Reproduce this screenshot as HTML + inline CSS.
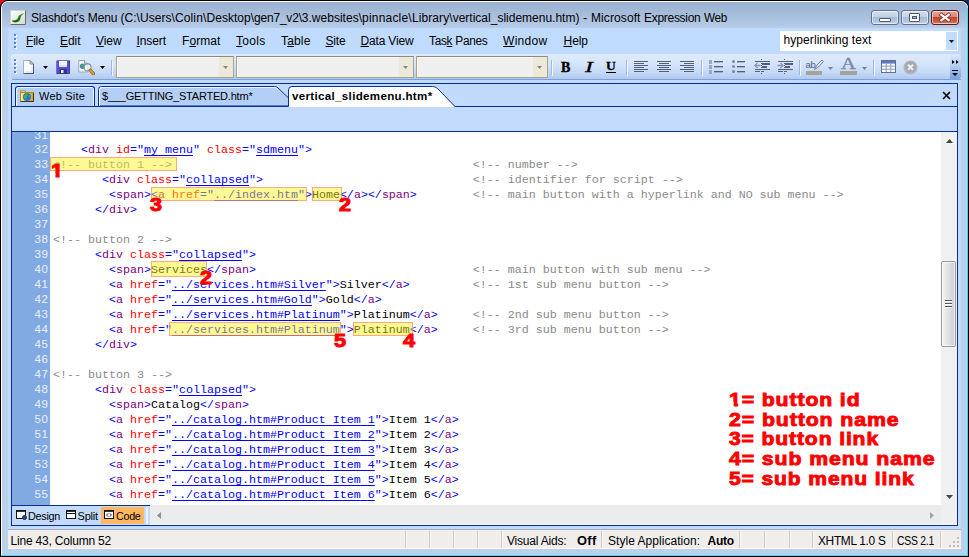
<!DOCTYPE html>
<html lang="en"><head><meta charset="utf-8"><title>Slashdot's Menu - Microsoft Expression Web</title>
<style>
html,body{margin:0;padding:0;background:#b9d1ea;}
body{width:969px;height:557px;overflow:hidden;position:relative;font-family:"Liberation Sans",sans-serif;}
#win{position:absolute;left:0;top:0;width:969px;height:557px;overflow:hidden;}
#win div,#win span.t,#win svg,#win pre{position:absolute;box-sizing:border-box;}
span.t{white-space:pre;color:#000;}
u{text-decoration:underline;text-underline-offset:1px;}
pre.code{margin:0;font-family:"Liberation Mono",monospace;font-size:11.667px;line-height:15px;color:#000;white-space:pre;}
pre.code b{font-weight:normal;}
b.p{color:#0000ff;} b.g{color:#800080;} b.a{color:#ff0000;} b.v{color:#0000ff;text-decoration:underline;text-decoration-thickness:1px;text-underline-offset:1.5px;} b.v i{color:transparent;font-style:normal;} b.c{color:#8a8a8a;}

</style></head>
<body>
<div id="win">
<div style="left:0px;top:0px;width:9px;height:9px;background:#e8101c;"></div>
<div style="left:960px;top:0px;width:9px;height:9px;background:#142c66;"></div>
<div style="left:0px;top:0px;width:969px;height:557px;background:#000;border-radius:8px 8px 0 0;"></div>
<div style="left:1px;top:1px;width:967px;height:555px;background:#fff;border-radius:7px 7px 0 0;"></div>
<div style="left:2px;top:2px;width:966px;height:554px;background:#b9d1ea;border-radius:6px 6px 0 0;"></div>
<div style="left:967px;top:8px;width:1px;height:548px;background:#48d6f5;"></div>
<div style="left:1px;top:555px;width:967px;height:1px;background:#48d6f5;"></div>
<div style="left:2px;top:2px;width:965px;height:26px;background:linear-gradient(#98afcf,#a4bbd9 40%,#b6cce8);border-radius:6px 6px 0 0;"></div>
<svg style="left:10px;top:10px" width="16" height="15" viewBox="0 0 16 15"><defs><linearGradient id="ig" x1="0" y1="0" x2="1" y2="1"><stop offset="0" stop-color="#ffffff"/><stop offset="1" stop-color="#d6d9d4"/></linearGradient><linearGradient id="sg" x1="0" y1="1" x2="1" y2="0"><stop offset="0" stop-color="#0c6400"/><stop offset=".6" stop-color="#1f7d10"/><stop offset="1" stop-color="#62b044"/></linearGradient></defs><rect x="0.5" y="0.5" width="15" height="14" fill="url(#ig)" stroke="#c9d0d6"/><path d="M0.5 14.5H15.5V0.5" fill="none" stroke="#626b74"/><path d="M1.8 10.2C2.2 13 8.6 13.6 10.3 9.2C10.7 7.8 10.4 7.4 11.2 6.2C12 5 13.4 3.8 14.6 3C12.4 3.4 10 4.4 8.8 6C8 7 8.4 7.6 7.6 8.8C6.4 10.4 3.6 10.8 1.8 10.2Z" fill="url(#sg)"/></svg>
<span class="t" style="left:31px;top:10px;font-size:12px;line-height:16px;letter-spacing:-0.137px;color:#000;">Slashdot's Menu </span>
<span class="t" style="left:120.5px;top:10px;font-size:12px;line-height:16px;letter-spacing:0.04px;color:#000;">(C:\Users\</span>
<span class="t" style="left:174.9px;top:10px;font-size:12px;line-height:16px;letter-spacing:0.152px;color:#000;">Colin\</span>
<span class="t" style="left:206.5px;top:10px;font-size:12px;line-height:16px;letter-spacing:0.018px;color:#000;">Desktop\</span>
<span class="t" style="left:254px;top:10px;font-size:12px;line-height:16px;letter-spacing:-0.199px;color:#000;">gen7_v2\</span>
<span class="t" style="left:301.8px;top:10px;font-size:12px;line-height:16px;letter-spacing:0.015px;color:#000;">3.websites\</span>
<span class="t" style="left:362px;top:10px;font-size:12px;line-height:16px;letter-spacing:0.206px;color:#000;">pinnacle\</span>
<span class="t" style="left:411.9px;top:10px;font-size:12px;line-height:16px;letter-spacing:0.098px;color:#000;">Library\</span>
<span class="t" style="left:452.7px;top:10px;font-size:12px;line-height:16px;letter-spacing:0.002px;color:#000;">vertical_slidemenu.htm) </span>
<span class="t" style="left:582.8px;top:10px;font-size:12px;line-height:16px;letter-spacing:0.3px;transform-origin:0 0;transform:scaleX(1.0323);--x:0px;color:#000;">- </span>
<span class="t" style="left:591px;top:10px;font-size:12px;line-height:16px;letter-spacing:0.098px;color:#000;">Microsoft </span>
<span class="t" style="left:644px;top:10px;font-size:12px;line-height:16px;letter-spacing:-0.291px;color:#000;">Expression </span>
<span class="t" style="left:703.5px;top:10px;font-size:12px;line-height:16px;letter-spacing:-0.3px;transform-origin:0 0;transform:scaleX(0.9759);--x:0px;color:#000;">Web</span>
<div style="left:871px;top:10px;width:28px;height:15px;background:linear-gradient(#d3dfee 0,#c2d1e6 45%,#a9bedb 50%,#b3c7e2 80%,#c6d6ea);border:1px solid #5f7390;border-radius:3px;box-shadow:inset 0 0 0 1px rgba(255,255,255,.55);"></div>
<div style="left:901px;top:10px;width:28px;height:15px;background:linear-gradient(#d3dfee 0,#c2d1e6 45%,#a9bedb 50%,#b3c7e2 80%,#c6d6ea);border:1px solid #5f7390;border-radius:3px;box-shadow:inset 0 0 0 1px rgba(255,255,255,.55);"></div>
<div style="left:931px;top:10px;width:28px;height:15px;background:linear-gradient(#e9a99c 0,#dc8473 45%,#c7452d 50%,#cf5a3f 80%,#dd8a70);border:1px solid #5b1d1f;border-radius:3px;box-shadow:inset 0 0 0 1px rgba(255,255,255,.55);"></div>
<div style="left:879px;top:18px;width:12px;height:4px;background:#fff;border:1px solid #4d5b70;border-radius:1px;"></div>
<div style="left:909px;top:13px;width:11px;height:9px;background:#fff;border:1px solid #4d5b70;border-radius:1px;"></div>
<div style="left:912px;top:16px;width:5px;height:3px;background:#9fb3d1;border:1px solid #4d5b70;"></div>
<svg style="left:938px;top:12px" width="14" height="11" viewBox="0 0 14 11"><path d="M3.4 2.8L10.6 8.2M10.6 2.8L3.4 8.2" stroke="#7a3028" stroke-width="3.8" stroke-linecap="square"/><path d="M3.4 2.8L10.6 8.2M10.6 2.8L3.4 8.2" stroke="#fff" stroke-width="2.3" stroke-linecap="square"/></svg>
<div style="left:8px;top:28px;width:953px;height:521px;background:#bfdbff;"></div>
<div style="left:8px;top:28px;width:953px;height:25px;background:#bfdbff;"></div>
<div style="left:15px;top:35px;width:2px;height:2px;background:#f4f8ff;"></div>
<div style="left:14px;top:34px;width:2px;height:2px;background:#5f7fc8;"></div>
<div style="left:15px;top:39px;width:2px;height:2px;background:#f4f8ff;"></div>
<div style="left:14px;top:38px;width:2px;height:2px;background:#5f7fc8;"></div>
<div style="left:15px;top:43px;width:2px;height:2px;background:#f4f8ff;"></div>
<div style="left:14px;top:42px;width:2px;height:2px;background:#5f7fc8;"></div>
<div style="left:15px;top:47px;width:2px;height:2px;background:#f4f8ff;"></div>
<div style="left:14px;top:46px;width:2px;height:2px;background:#5f7fc8;"></div>
<span class="t" style="left:26px;top:33px;font-size:12px;line-height:16px;letter-spacing:-0.215px;"><u>F</u>ile</span>
<span class="t" style="left:60px;top:33px;font-size:12px;line-height:16px;letter-spacing:-0.051px;"><u>E</u>dit</span>
<span class="t" style="left:96px;top:33px;font-size:12px;line-height:16px;letter-spacing:-0.078px;"><u>V</u>iew</span>
<span class="t" style="left:136.5px;top:33px;font-size:12px;line-height:16px;letter-spacing:-0.089px;"><u>I</u>nsert</span>
<span class="t" style="left:182px;top:33px;font-size:12px;line-height:16px;letter-spacing:0.078px;">F<u>o</u>rmat</span>
<span class="t" style="left:236px;top:33px;font-size:12px;line-height:16px;letter-spacing:0.297px;"><u>T</u>ools</span>
<span class="t" style="left:281px;top:33px;font-size:12px;line-height:16px;letter-spacing:0.159px;">T<u>a</u>ble</span>
<span class="t" style="left:325.5px;top:33px;font-size:12px;line-height:16px;letter-spacing:-0.176px;"><u>S</u>ite</span>
<span class="t" style="left:360.5px;top:33px;font-size:12px;line-height:16px;letter-spacing:-0.165px;"><u>D</u>ata View</span>
<span class="t" style="left:429px;top:33px;font-size:12px;line-height:16px;letter-spacing:-0.3px;transform-origin:0 0;transform:scaleX(0.9907);--x:0px;">Tas<u>k</u> Panes</span>
<span class="t" style="left:503px;top:33px;font-size:12px;line-height:16px;letter-spacing:0.3px;transform-origin:0 0;transform:scaleX(1.0003);--x:0px;"><u>W</u>indow</span>
<span class="t" style="left:563.5px;top:33px;font-size:12px;line-height:16px;letter-spacing:-0.047px;"><u>H</u>elp</span>
<div style="left:780px;top:31px;width:178px;height:20px;background:#fff;"></div>
<div style="left:946px;top:32px;width:11px;height:18px;background:#c3dcfd;"></div>
<span class="t" style="left:783.5px;top:32px;font-size:12px;line-height:16px;letter-spacing:0.075px;">hyperlinking text</span>
<svg style="left:949px;top:40px" width="5" height="3" viewBox="0 0 5 3"><path d="M0 0H5L2.5 3Z" fill="#000"/></svg>
<div style="left:8px;top:53px;width:953px;height:30px;background:#bfdbff;"></div>
<div style="left:11px;top:54px;width:940px;height:25px;background:linear-gradient(#dfeafb 0,#d5e4f9 40%,#c3d8f6 75%,#b0caef 100%);border-radius:3px 0 0 3px;"></div>
<div style="left:12px;top:79px;width:949px;height:1px;background:#7e9fd8;"></div>
<div style="left:950px;top:54px;width:11px;height:25px;background:linear-gradient(#dbe8fb,#b7cff3 45%,#8fb0e6 80%,#7a9fde);border-radius:0 3px 3px 0;"></div>
<div style="left:15px;top:60px;width:2px;height:2px;background:#f4f8ff;"></div>
<div style="left:14px;top:59px;width:2px;height:2px;background:#5f7fc8;"></div>
<div style="left:15px;top:64px;width:2px;height:2px;background:#f4f8ff;"></div>
<div style="left:14px;top:63px;width:2px;height:2px;background:#5f7fc8;"></div>
<div style="left:15px;top:68px;width:2px;height:2px;background:#f4f8ff;"></div>
<div style="left:14px;top:67px;width:2px;height:2px;background:#5f7fc8;"></div>
<div style="left:15px;top:72px;width:2px;height:2px;background:#f4f8ff;"></div>
<div style="left:14px;top:71px;width:2px;height:2px;background:#5f7fc8;"></div>
<svg style="left:23px;top:60px" width="11" height="14" viewBox="0 0 11 14"><path d="M0.5 0.5H7L10.5 4V13.5H0.5Z" fill="#fdfdfe" stroke="#a9b0c0"/><path d="M0.5 13.5H10.5V4" fill="none" stroke="#4e5566"/><path d="M7 0.5V4H10.5Z" fill="#dfe3ec" stroke="#6a7184" stroke-width=".8"/><path d="M2 12H9V6" fill="none" stroke="#d5dae6"/></svg>
<svg style="left:43px;top:66px" width="5" height="3" viewBox="0 0 5 3"><path d="M0 0H5L2.5 3Z" fill="#000"/></svg>
<svg style="left:56px;top:60px" width="14" height="14" viewBox="0 0 14 14"><rect x="0.5" y="0.5" width="13" height="13" rx="1" fill="#5454c8" stroke="#6f70d8"/><path d="M0.5 13.5H13.5V0.5" fill="none" stroke="#3c3ca0"/><rect x="3" y="1" width="8" height="6" fill="#f4f5fb"/><rect x="3" y="5" width="8" height="2" fill="#d9dbea"/><rect x="3.5" y="9" width="7.5" height="4.5" fill="#2e2f80"/><rect x="5" y="10" width="2.5" height="3" fill="#eef"/></svg>
<svg style="left:78px;top:59px" width="17" height="16" viewBox="0 0 17 16"><path d="M0.8 1.5H6.5L9.5 4.5V13H0.8Z" fill="#fbfcfe" stroke="#9aa3b6"/><path d="M6.5 1.5V4.5H9.5" fill="#e3e7ef" stroke="#7b8498" stroke-width=".8"/><circle cx="4.6" cy="7.2" r="2.7" fill="#3a86d4"/><path d="M2.8 6.4Q4.4 4.6 6.2 6Q6 8.2 4 8.6Z" fill="#4cb23c"/><circle cx="9.6" cy="8.4" r="3.5" fill="#eef3fb" fill-opacity=".82" stroke="#8a93a3" stroke-width="1.2"/><path d="M12.2 11.2L15.4 14.6" stroke="#8a5a20" stroke-width="3.2" stroke-linecap="round"/><path d="M12.2 11.2L15.4 14.6" stroke="#e09a40" stroke-width="2" stroke-linecap="round"/></svg>
<svg style="left:100px;top:66px" width="5" height="3" viewBox="0 0 5 3"><path d="M0 0H5L2.5 3Z" fill="#000"/></svg>
<div style="left:111px;top:60px;width:1px;height:15px;background:#9cb8e6;"></div>
<div style="left:112px;top:61px;width:1px;height:15px;background:#f4f8fe;"></div>
<div style="left:116px;top:56px;width:118px;height:22px;background:#efefef;border:1px solid #aaa48f;border-top-color:#8f8b7c;box-shadow:inset 1px 1px 0 #f8f8f6;"></div>
<div style="left:219px;top:57px;width:14px;height:20px;background:#ece9d8;"></div>
<svg style="left:223px;top:66px" width="5" height="3" viewBox="0 0 5 3"><path d="M0 0H5L2.5 3Z" fill="#858585"/></svg>
<div style="left:236px;top:56px;width:178px;height:22px;background:#efefef;border:1px solid #aaa48f;border-top-color:#8f8b7c;box-shadow:inset 1px 1px 0 #f8f8f6;"></div>
<div style="left:399px;top:57px;width:14px;height:20px;background:#ece9d8;"></div>
<svg style="left:403px;top:66px" width="5" height="3" viewBox="0 0 5 3"><path d="M0 0H5L2.5 3Z" fill="#858585"/></svg>
<div style="left:416px;top:56px;width:132px;height:22px;background:#efefef;border:1px solid #aaa48f;border-top-color:#8f8b7c;box-shadow:inset 1px 1px 0 #f8f8f6;"></div>
<div style="left:533px;top:57px;width:14px;height:20px;background:#ece9d8;"></div>
<svg style="left:537px;top:66px" width="5" height="3" viewBox="0 0 5 3"><path d="M0 0H5L2.5 3Z" fill="#858585"/></svg>
<div style="left:551px;top:60px;width:1px;height:15px;background:#9cb8e6;"></div>
<div style="left:552px;top:61px;width:1px;height:15px;background:#f4f8fe;"></div>
<span class="t" style="left:561px;top:59px;font-size:14px;line-height:18px;font-family:'Liberation Serif',serif;font-weight:bold;-webkit-text-stroke:.4px #000;">B</span>
<span class="t" style="left:584.5px;top:59px;font-size:14px;line-height:18px;font-family:'Liberation Serif',serif;font-style:italic;-webkit-text-stroke:.3px #000;transform-origin:0 0;transform:scaleX(1.7);">I</span>
<span class="t" style="left:606px;top:57px;font-size:13.5px;line-height:18px;font-family:'Liberation Serif',serif;font-weight:bold;-webkit-text-stroke:.3px #000;">U</span>
<div style="left:606px;top:72px;width:10px;height:1px;background:#000;"></div>
<div style="left:626px;top:60px;width:1px;height:15px;background:#9cb8e6;"></div>
<div style="left:627px;top:61px;width:1px;height:15px;background:#f4f8fe;"></div>
<div style="left:634px;top:61px;width:14px;height:1px;background:#54607a;"></div>
<div style="left:634px;top:63px;width:10px;height:1px;background:#54607a;"></div>
<div style="left:634px;top:65px;width:14px;height:1px;background:#54607a;"></div>
<div style="left:634px;top:67px;width:10px;height:1px;background:#54607a;"></div>
<div style="left:634px;top:69px;width:14px;height:1px;background:#54607a;"></div>
<div style="left:634px;top:71px;width:10px;height:1px;background:#54607a;"></div>
<div style="left:657px;top:61px;width:14px;height:1px;background:#54607a;"></div>
<div style="left:659px;top:63px;width:10px;height:1px;background:#54607a;"></div>
<div style="left:657px;top:65px;width:14px;height:1px;background:#54607a;"></div>
<div style="left:659px;top:67px;width:10px;height:1px;background:#54607a;"></div>
<div style="left:657px;top:69px;width:14px;height:1px;background:#54607a;"></div>
<div style="left:659px;top:71px;width:10px;height:1px;background:#54607a;"></div>
<div style="left:680px;top:61px;width:14px;height:1px;background:#54607a;"></div>
<div style="left:684px;top:63px;width:10px;height:1px;background:#54607a;"></div>
<div style="left:680px;top:65px;width:14px;height:1px;background:#54607a;"></div>
<div style="left:684px;top:67px;width:10px;height:1px;background:#54607a;"></div>
<div style="left:680px;top:69px;width:14px;height:1px;background:#54607a;"></div>
<div style="left:684px;top:71px;width:10px;height:1px;background:#54607a;"></div>
<div style="left:701px;top:60px;width:1px;height:15px;background:#9cb8e6;"></div>
<div style="left:702px;top:61px;width:1px;height:15px;background:#f4f8fe;"></div>
<div style="left:714px;top:61px;width:9px;height:1px;background:#54607a;"></div>
<div style="left:714px;top:62px;width:9px;height:1px;background:#54607a;opacity:.35;"></div>
<div style="left:709px;top:60px;width:3px;height:4px;background:#8e9bb8;opacity:.8;"></div>
<div style="left:714px;top:66px;width:9px;height:1px;background:#54607a;"></div>
<div style="left:714px;top:67px;width:9px;height:1px;background:#54607a;opacity:.35;"></div>
<div style="left:709px;top:65px;width:3px;height:4px;background:#8e9bb8;opacity:.8;"></div>
<div style="left:714px;top:71px;width:9px;height:1px;background:#54607a;"></div>
<div style="left:714px;top:72px;width:9px;height:1px;background:#54607a;opacity:.35;"></div>
<div style="left:709px;top:70px;width:3px;height:4px;background:#8e9bb8;opacity:.8;"></div>
<div style="left:737px;top:61px;width:8px;height:1px;background:#54607a;"></div>
<div style="left:737px;top:62px;width:8px;height:1px;background:#54607a;opacity:.35;"></div>
<div style="left:732px;top:60px;width:3px;height:3px;background:#7c88a4;border-radius:1.5px;"></div>
<div style="left:737px;top:66px;width:8px;height:1px;background:#54607a;"></div>
<div style="left:737px;top:67px;width:8px;height:1px;background:#54607a;opacity:.35;"></div>
<div style="left:732px;top:65px;width:3px;height:3px;background:#7c88a4;border-radius:1.5px;"></div>
<div style="left:737px;top:71px;width:8px;height:1px;background:#54607a;"></div>
<div style="left:737px;top:72px;width:8px;height:1px;background:#54607a;opacity:.35;"></div>
<div style="left:732px;top:70px;width:3px;height:3px;background:#7c88a4;border-radius:1.5px;"></div>
<svg style="left:754px;top:59px" width="17" height="16" viewBox="0 0 17 16"><path d="M7.5 0V16" stroke="#54607a" stroke-dasharray="1 1"/><path d="M1 2.5H16M1 10.5H16M1 12.5H6M8 12.5H10" stroke="#54607a"/><path d="M8 5H16M8 8H13" stroke="#54607a" stroke-width="2"/><path d="M6.5 6.5H1M3.5 4L1 6.5L3.5 9" fill="none" stroke="#8796bd" stroke-width="1.3"/></svg>
<svg style="left:777px;top:59px" width="17" height="16" viewBox="0 0 17 16"><path d="M7.5 0V16" stroke="#54607a" stroke-dasharray="1 1"/><path d="M1 2.5H16M1 10.5H16M1 12.5H6M8 12.5H10" stroke="#54607a"/><path d="M8 5H16M8 8H13" stroke="#54607a" stroke-width="2"/><path d="M0.5 6.5H6M3.5 4L6 6.5L3.5 9" fill="none" stroke="#8796bd" stroke-width="1.3"/></svg>
<div style="left:799px;top:60px;width:1px;height:15px;background:#9cb8e6;"></div>
<div style="left:800px;top:61px;width:1px;height:15px;background:#f4f8fe;"></div>
<span class="t" style="left:805.5px;top:58px;font-size:9.5px;line-height:14px;color:#54607a;letter-spacing:-.4px;">ab</span>
<svg style="left:814px;top:59px" width="10" height="11" viewBox="0 0 10 11"><path d="M0.5 10.5L3 6L8 1L9.4 2.6L4.6 7.8Z" fill="#dfe5f2" stroke="#6b7894" stroke-width=".9"/></svg>
<div style="left:806px;top:71px;width:16px;height:4px;background:#a5a49c;"></div>
<svg style="left:828px;top:67px" width="5" height="3" viewBox="0 0 5 3"><path d="M0 0H5L2.5 3Z" fill="#7b7f88"/></svg>
<span class="t" style="left:840.5px;top:54px;font-size:16px;line-height:20px;font-family:'Liberation Serif',serif;color:#7d89a8;-webkit-text-stroke:.4px #7d89a8;transform-origin:0 0;transform:scaleX(1.28);">A</span>
<div style="left:840px;top:71px;width:17px;height:4px;background:#a5a49c;"></div>
<svg style="left:862px;top:67px" width="5" height="3" viewBox="0 0 5 3"><path d="M0 0H5L2.5 3Z" fill="#7b7f88"/></svg>
<div style="left:873px;top:60px;width:1px;height:15px;background:#9cb8e6;"></div>
<div style="left:874px;top:61px;width:1px;height:15px;background:#f4f8fe;"></div>
<svg style="left:881px;top:60px" width="15" height="13" viewBox="0 0 15 13"><rect x="0.5" y="0.5" width="14" height="12" fill="#fff" stroke="#5f6f95"/><rect x="1" y="1" width="13" height="2.6" fill="#5a78c0"/><path d="M1 6.2H14M1 9.2H14M5.2 3.5V12M9.8 3.5V12" stroke="#8c99b8" stroke-width="1"/></svg>
<svg style="left:903px;top:60px" width="15" height="15" viewBox="0 0 15 15"><circle cx="7.5" cy="7.5" r="7" fill="#b4b6ba"/><circle cx="7.5" cy="7" r="5.6" fill="#a6a8ad"/><path d="M5 4.8L10 9.8M10 4.8L5 9.8" stroke="#eef0f3" stroke-width="2"/></svg>
<svg style="left:952px;top:60px" width="7" height="4" viewBox="0 0 7 4"><path d="M0 0L2.6 2L0 4ZM4 0L6.6 2L4 4Z" fill="#000"/></svg>
<div style="left:952px;top:70px;width:6px;height:1px;background:#000;"></div>
<svg style="left:952px;top:73px" width="6" height="3" viewBox="0 0 6 3"><path d="M0 0H6L3.0 3Z" fill="#000"/></svg>
<div style="left:8px;top:80px;width:953px;height:3px;background:#bfdbff;"></div>
<div style="left:11px;top:83px;width:947px;height:443px;background:#c2dbfc;border:1px solid #0a2d96;"></div>
<div style="left:12px;top:106px;width:945px;height:1px;background:#0a2d96;"></div>
<div style="left:15px;top:86px;width:80px;height:20px;background:#b4cff5;border:1px solid #0a2d96;border-bottom:none;border-radius:3px 3px 0 0;box-shadow:inset 1px 1px 0 #f2f7ff,inset -1px 0 0 #f2f7ff;"></div>
<svg style="left:20px;top:90px" width="14" height="12" viewBox="0 0 14 12"><defs><linearGradient id="fg" x1="0" y1="0" x2="1" y2="0"><stop offset="0" stop-color="#fdeb96"/><stop offset=".6" stop-color="#efc44c"/><stop offset="1" stop-color="#d89c1c"/></linearGradient></defs><path d="M0.5 2.5V0.8H5L6.2 2.5" fill="#f6dc84" stroke="#b08a2c"/><rect x="0.5" y="2.5" width="13" height="9" fill="url(#fg)" stroke="#b08a2c"/><path d="M0.5 11.5H13.5V3" fill="none" stroke="#4a3606"/><circle cx="7" cy="7" r="4" fill="#2f6fdc"/><path d="M4 5.4Q5.6 3.2 7.6 3.4Q8.4 5 7 6.4Q6.6 8.6 5.2 9.4Q3.4 7.6 4 5.4ZM9 4.2Q10.8 5.2 10.6 7.4Q9.6 8 9 6.6Z" fill="#3cb24a"/></svg>
<span class="t" style="left:39px;top:89px;font-size:11px;line-height:15px;letter-spacing:0.195px;">Web Site</span>
<svg style="left:98px;top:85px" width="194" height="21" viewBox="0 0 194 21"><path d="M0.5 21V4.5Q0.5 1.5 3.5 1.5H176.5Q179 1.5 181 3.8L190.5 13V21Z" fill="#b4cff5" stroke="#0a2d96"/><path d="M1.5 21V4.8Q1.5 2.5 3.8 2.5H176Q178.3 2.5 180 4.4" fill="none" stroke="#f2f7ff"/></svg>
<span class="t" style="left:102px;top:89px;font-size:11px;line-height:15px;letter-spacing:-0.208px;">$___GETTING_STARTED.htm*</span>
<svg style="left:288px;top:85px" width="170" height="23" viewBox="0 0 170 23"><path d="M0.5 23V5Q0.5 1.5 4 1.5H144.5Q147.5 1.5 149.5 3.5L167.5 22.5L167.5 23Z" fill="#fff"/><path d="M0.5 21.5V5Q0.5 1.5 4 1.5H144.5Q147.5 1.5 149.5 3.5L167 21.5" fill="none" stroke="#0a2d96"/></svg>
<span class="t" style="left:292px;top:89px;font-size:11px;line-height:15px;letter-spacing:0.3px;transform-origin:0 0;transform:scaleX(1.0527);--x:0px;font-weight:bold;">vertical_slidemenu.htm*</span>
<svg style="left:942px;top:91px" width="9" height="9" viewBox="0 0 9 9"><path d="M1 1L8 8M8 1L1 8" stroke="#000" stroke-width="1.7"/></svg>
<div style="left:12px;top:107px;width:945px;height:24px;background:#c2dbfc;"></div>
<div style="left:12px;top:131px;width:945px;height:1px;background:#0a2d96;"></div>
<div style="left:12px;top:132px;width:929px;height:374px;background:#fff;"></div>
<div style="left:12px;top:132px;width:38px;height:374px;background:#81a9e2;"></div>
<div style="left:12px;top:132px;width:38px;height:10px;overflow:hidden;"><span class="t" style="right:1.3px;top:-5px;font-size:11.5px;line-height:16px;color:#eaf1fc;letter-spacing:.7px;">31</span></div>
<span class="t" style="left:12px;width:36.7px;text-align:right;top:141px;font-size:11.5px;line-height:16px;color:#eaf1fc;letter-spacing:.7px;">32</span>
<span class="t" style="left:12px;width:36.7px;text-align:right;top:156px;font-size:11.5px;line-height:16px;color:#eaf1fc;letter-spacing:.7px;">33</span>
<span class="t" style="left:12px;width:36.7px;text-align:right;top:171px;font-size:11.5px;line-height:16px;color:#eaf1fc;letter-spacing:.7px;">34</span>
<span class="t" style="left:12px;width:36.7px;text-align:right;top:186px;font-size:11.5px;line-height:16px;color:#eaf1fc;letter-spacing:.7px;">35</span>
<span class="t" style="left:12px;width:36.7px;text-align:right;top:201px;font-size:11.5px;line-height:16px;color:#eaf1fc;letter-spacing:.7px;">36</span>
<span class="t" style="left:12px;width:36.7px;text-align:right;top:216px;font-size:11.5px;line-height:16px;color:#eaf1fc;letter-spacing:.7px;">37</span>
<span class="t" style="left:12px;width:36.7px;text-align:right;top:231px;font-size:11.5px;line-height:16px;color:#eaf1fc;letter-spacing:.7px;">38</span>
<span class="t" style="left:12px;width:36.7px;text-align:right;top:246px;font-size:11.5px;line-height:16px;color:#eaf1fc;letter-spacing:.7px;">39</span>
<span class="t" style="left:12px;width:36.7px;text-align:right;top:261px;font-size:11.5px;line-height:16px;color:#eaf1fc;letter-spacing:.7px;">40</span>
<span class="t" style="left:12px;width:36.7px;text-align:right;top:276px;font-size:11.5px;line-height:16px;color:#eaf1fc;letter-spacing:.7px;">41</span>
<span class="t" style="left:12px;width:36.7px;text-align:right;top:291px;font-size:11.5px;line-height:16px;color:#eaf1fc;letter-spacing:.7px;">42</span>
<span class="t" style="left:12px;width:36.7px;text-align:right;top:306px;font-size:11.5px;line-height:16px;color:#eaf1fc;letter-spacing:.7px;">43</span>
<span class="t" style="left:12px;width:36.7px;text-align:right;top:321px;font-size:11.5px;line-height:16px;color:#eaf1fc;letter-spacing:.7px;">44</span>
<span class="t" style="left:12px;width:36.7px;text-align:right;top:336px;font-size:11.5px;line-height:16px;color:#eaf1fc;letter-spacing:.7px;">45</span>
<span class="t" style="left:12px;width:36.7px;text-align:right;top:351px;font-size:11.5px;line-height:16px;color:#eaf1fc;letter-spacing:.7px;">46</span>
<span class="t" style="left:12px;width:36.7px;text-align:right;top:366px;font-size:11.5px;line-height:16px;color:#eaf1fc;letter-spacing:.7px;">47</span>
<span class="t" style="left:12px;width:36.7px;text-align:right;top:381px;font-size:11.5px;line-height:16px;color:#eaf1fc;letter-spacing:.7px;">48</span>
<span class="t" style="left:12px;width:36.7px;text-align:right;top:396px;font-size:11.5px;line-height:16px;color:#eaf1fc;letter-spacing:.7px;">49</span>
<span class="t" style="left:12px;width:36.7px;text-align:right;top:411px;font-size:11.5px;line-height:16px;color:#eaf1fc;letter-spacing:.7px;">50</span>
<span class="t" style="left:12px;width:36.7px;text-align:right;top:426px;font-size:11.5px;line-height:16px;color:#eaf1fc;letter-spacing:.7px;">51</span>
<span class="t" style="left:12px;width:36.7px;text-align:right;top:441px;font-size:11.5px;line-height:16px;color:#eaf1fc;letter-spacing:.7px;">52</span>
<span class="t" style="left:12px;width:36.7px;text-align:right;top:456px;font-size:11.5px;line-height:16px;color:#eaf1fc;letter-spacing:.7px;">53</span>
<span class="t" style="left:12px;width:36.7px;text-align:right;top:471px;font-size:11.5px;line-height:16px;color:#eaf1fc;letter-spacing:.7px;">54</span>
<span class="t" style="left:12px;width:36.7px;text-align:right;top:486px;font-size:11.5px;line-height:16px;color:#eaf1fc;letter-spacing:.7px;">55</span>
<pre class="code" style="left:53px;top:143px;">    <b class="p">&lt;</b><b class="g">div</b> <b class="a">id</b><b class="p">="</b><b class="v">my<i>_</i>menu</b><b class="p">"</b> <b class="a">class</b><b class="p">="</b><b class="v">sdmenu</b><b class="p">"</b><b class="p">&gt;</b>
<b class="c">&lt;!-- button 1 --&gt;</b>                                           <b class="c">&lt;!-- number --&gt;</b>
       <b class="p">&lt;</b><b class="g">div</b> <b class="a">class</b><b class="p">="</b><b class="v">collapsed</b><b class="p">"</b><b class="p">&gt;</b>                              <b class="c">&lt;!-- identifier for script --&gt;</b>
        <b class="p">&lt;</b><b class="g">span</b><b class="p">&gt;</b><b class="p">&lt;</b><b class="g">a</b> <b class="a">href</b><b class="p">="</b><b class="v">../index.htm</b><b class="p">"</b><b class="p">&gt;</b>Home<b class="p">&lt;/</b><b class="g">a</b><b class="p">&gt;</b><b class="p">&lt;/</b><b class="g">span</b><b class="p">&gt;</b>        <b class="c">&lt;!-- main button with a hyperlink and NO sub menu --&gt;</b>
      <b class="p">&lt;/</b><b class="g">div</b><b class="p">&gt;</b>

<b class="c">&lt;!-- button 2 --&gt;</b>
      <b class="p">&lt;</b><b class="g">div</b> <b class="a">class</b><b class="p">="</b><b class="v">collapsed</b><b class="p">"</b><b class="p">&gt;</b>
        <b class="p">&lt;</b><b class="g">span</b><b class="p">&gt;</b>Services<b class="p">&lt;/</b><b class="g">span</b><b class="p">&gt;</b>                               <b class="c">&lt;!-- main button with sub menu --&gt;</b>
        <b class="p">&lt;</b><b class="g">a</b> <b class="a">href</b><b class="p">="</b><b class="v">../services.htm#Silver</b><b class="p">"</b><b class="p">&gt;</b>Silver<b class="p">&lt;/</b><b class="g">a</b><b class="p">&gt;</b>         <b class="c">&lt;!-- 1st sub menu button --&gt;</b>
        <b class="p">&lt;</b><b class="g">a</b> <b class="a">href</b><b class="p">="</b><b class="v">../services.htm#Gold</b><b class="p">"</b><b class="p">&gt;</b>Gold<b class="p">&lt;/</b><b class="g">a</b><b class="p">&gt;</b>
        <b class="p">&lt;</b><b class="g">a</b> <b class="a">href</b><b class="p">="</b><b class="v">../services.htm#Platinum</b><b class="p">"</b><b class="p">&gt;</b>Platinum<b class="p">&lt;/</b><b class="g">a</b><b class="p">&gt;</b>     <b class="c">&lt;!-- 2nd sub menu button --&gt;</b>
        <b class="p">&lt;</b><b class="g">a</b> <b class="a">href</b><b class="p">="</b><b class="v">../services.htm#Platinum</b><b class="p">"</b><b class="p">&gt;</b>Platinum<b class="p">&lt;/</b><b class="g">a</b><b class="p">&gt;</b>     <b class="c">&lt;!-- 3rd sub menu button --&gt;</b>
      <b class="p">&lt;/</b><b class="g">div</b><b class="p">&gt;</b>

<b class="c">&lt;!-- button 3 --&gt;</b>
      <b class="p">&lt;</b><b class="g">div</b> <b class="a">class</b><b class="p">="</b><b class="v">collapsed</b><b class="p">"</b><b class="p">&gt;</b>
        <b class="p">&lt;</b><b class="g">span</b><b class="p">&gt;</b>Catalog<b class="p">&lt;/</b><b class="g">span</b><b class="p">&gt;</b>
        <b class="p">&lt;</b><b class="g">a</b> <b class="a">href</b><b class="p">="</b><b class="v">../catalog.htm#Product<i>_</i>Item<i>_</i>1</b><b class="p">"</b><b class="p">&gt;</b>Item 1<b class="p">&lt;/</b><b class="g">a</b><b class="p">&gt;</b>
        <b class="p">&lt;</b><b class="g">a</b> <b class="a">href</b><b class="p">="</b><b class="v">../catalog.htm#Product<i>_</i>Item<i>_</i>2</b><b class="p">"</b><b class="p">&gt;</b>Item 2<b class="p">&lt;/</b><b class="g">a</b><b class="p">&gt;</b>
        <b class="p">&lt;</b><b class="g">a</b> <b class="a">href</b><b class="p">="</b><b class="v">../catalog.htm#Product<i>_</i>Item<i>_</i>3</b><b class="p">"</b><b class="p">&gt;</b>Item 3<b class="p">&lt;/</b><b class="g">a</b><b class="p">&gt;</b>
        <b class="p">&lt;</b><b class="g">a</b> <b class="a">href</b><b class="p">="</b><b class="v">../catalog.htm#Product<i>_</i>Item<i>_</i>4</b><b class="p">"</b><b class="p">&gt;</b>Item 4<b class="p">&lt;/</b><b class="g">a</b><b class="p">&gt;</b>
        <b class="p">&lt;</b><b class="g">a</b> <b class="a">href</b><b class="p">="</b><b class="v">../catalog.htm#Product<i>_</i>Item<i>_</i>5</b><b class="p">"</b><b class="p">&gt;</b>Item 5<b class="p">&lt;/</b><b class="g">a</b><b class="p">&gt;</b>
        <b class="p">&lt;</b><b class="g">a</b> <b class="a">href</b><b class="p">="</b><b class="v">../catalog.htm#Product<i>_</i>Item<i>_</i>6</b><b class="p">"</b><b class="p">&gt;</b>Item 6<b class="p">&lt;/</b><b class="g">a</b><b class="p">&gt;</b></pre>
<div style="left:50px;top:157px;width:127px;height:14px;background:rgba(250,243,30,.47);border:1px solid rgba(255,105,105,.55);"></div>
<div style="left:151px;top:187px;width:156px;height:14px;background:rgba(250,243,30,.47);border:1px solid rgba(255,105,105,.55);"></div>
<div style="left:312px;top:187px;width:30px;height:14px;background:rgba(250,243,30,.47);border:1px solid rgba(255,105,105,.55);"></div>
<div style="left:151px;top:261px;width:56px;height:16px;background:rgba(250,243,30,.47);border:1px solid rgba(255,105,105,.55);"></div>
<div style="left:169px;top:322px;width:172px;height:14px;background:rgba(250,243,30,.47);border:1px solid rgba(255,105,105,.55);"></div>
<div style="left:353px;top:322px;width:60px;height:14px;background:rgba(250,243,30,.47);border:1px solid rgba(255,105,105,.55);"></div>
<span class="t" style="left:50.8px;top:160px;font-size:18.5px;line-height:22px;color:#f00;font-weight:bold;-webkit-text-stroke:1px #f00;transform-origin:0 0;transform:scaleX(1.17);clip-path:polygon(0 0,100% 0,100% 61%,72% 61%,72% 100%,37% 100%,37% 61%,0 61%);">1</span>
<span class="t" style="left:150px;top:194px;font-size:18.5px;line-height:22px;color:#f00;font-weight:bold;-webkit-text-stroke:1px #f00;transform-origin:0 0;transform:scaleX(1.17);">3</span>
<span class="t" style="left:338.5px;top:194px;font-size:18.5px;line-height:22px;color:#f00;font-weight:bold;-webkit-text-stroke:1px #f00;transform-origin:0 0;transform:scaleX(1.17);">2</span>
<span class="t" style="left:200px;top:267px;font-size:18.5px;line-height:22px;color:#f00;font-weight:bold;-webkit-text-stroke:1px #f00;transform-origin:0 0;transform:scaleX(1.17);">2</span>
<span class="t" style="left:334px;top:330px;font-size:18.5px;line-height:22px;color:#f00;font-weight:bold;-webkit-text-stroke:1px #f00;transform-origin:0 0;transform:scaleX(1.17);">5</span>
<span class="t" style="left:402.5px;top:330px;font-size:18.5px;line-height:22px;color:#f00;font-weight:bold;-webkit-text-stroke:1px #f00;transform-origin:0 0;transform:scaleX(1.17);">4</span>
<span class="t" style="left:728.5px;top:388px;font-size:18.7px;line-height:23px;letter-spacing:0.8px;transform-origin:0 0;transform:scaleX(1.1335);color:#f00;font-weight:bold;-webkit-text-stroke:.9px #f00;"><i style="display:inline-block;font-style:normal;clip-path:polygon(0 0,100% 0,100% 61%,72% 61%,72% 100%,37% 100%,37% 61%,0 61%);">1</i>= button id</span>
<span class="t" style="left:728.5px;top:408px;font-size:18.7px;line-height:23px;letter-spacing:0.8px;transform-origin:0 0;transform:scaleX(1.138);color:#f00;font-weight:bold;-webkit-text-stroke:.9px #f00;">2= button name</span>
<span class="t" style="left:728.5px;top:427px;font-size:18.7px;line-height:23px;letter-spacing:0.8px;transform-origin:0 0;transform:scaleX(1.1261);color:#f00;font-weight:bold;-webkit-text-stroke:.9px #f00;">3= button link</span>
<span class="t" style="left:728.5px;top:447px;font-size:18.7px;line-height:23px;letter-spacing:0.8px;transform-origin:0 0;transform:scaleX(1.1373);color:#f00;font-weight:bold;-webkit-text-stroke:.9px #f00;">4= sub menu name</span>
<span class="t" style="left:728.5px;top:467px;font-size:18.7px;line-height:23px;letter-spacing:0.8px;transform-origin:0 0;transform:scaleX(1.1247);color:#f00;font-weight:bold;-webkit-text-stroke:.9px #f00;">5= sub menu link</span>
<div style="left:941px;top:132px;width:16px;height:374px;background:#f0f0f0;"></div>
<svg style="left:946px;top:139px" width="7" height="4" viewBox="0 0 7 4"><path d="M0 4H7L3.5 0Z" fill="#454545"/></svg>
<svg style="left:946px;top:495px" width="7" height="4" viewBox="0 0 7 4"><path d="M0 0H7L3.5 4Z" fill="#454545"/></svg>
<div style="left:941px;top:261px;width:15px;height:86px;background:linear-gradient(90deg,#f3f3f3,#e2e2e2 45%,#cfcfcf);border:1px solid #979797;border-radius:2px;box-shadow:inset 0 0 0 1px rgba(255,255,255,.7);"></div>
<div style="left:945px;top:300px;width:7px;height:1px;background:#555;"></div>
<div style="left:945px;top:301px;width:7px;height:1px;background:#fff;"></div>
<div style="left:945px;top:303px;width:7px;height:1px;background:#555;"></div>
<div style="left:945px;top:304px;width:7px;height:1px;background:#fff;"></div>
<div style="left:945px;top:306px;width:7px;height:1px;background:#555;"></div>
<div style="left:945px;top:307px;width:7px;height:1px;background:#fff;"></div>
<div style="left:150px;top:505px;width:807px;height:19px;background:#ececec;"></div>
<div style="left:150px;top:524px;width:807px;height:1px;background:#fafafa;"></div>
<div style="left:941px;top:505px;width:16px;height:19px;background:#efefef;"></div>
<svg style="left:157px;top:512px" width="4" height="7" viewBox="0 0 4 7"><path d="M4 0V7L0 3.5Z" fill="#8f8f8f"/></svg>
<svg style="left:930px;top:512px" width="4" height="7" viewBox="0 0 4 7"><path d="M0 0V7L4 3.5Z" fill="#a2a2a2"/></svg>
<div style="left:12px;top:505px;width:138px;height:1px;background:#0a2d96;"></div>
<div style="left:12px;top:506px;width:138px;height:19px;background:#c2dbfc;"></div>
<div style="left:146px;top:507px;width:2px;height:17px;background:#eef4fe;"></div>
<div style="left:101px;top:507px;width:43px;height:17px;background:#ffb860;"></div>
<div style="left:16px;top:510px;width:10px;height:9px;background:#fff;border:1px solid #111;box-shadow:inset 0 1px 0 #333;"></div>
<div style="left:22px;top:515px;width:5px;height:5px;background:#23469a;border-radius:3px;border:1px solid #1b2f5e;"></div>
<span class="t" style="left:27.5px;top:509px;font-size:11px;line-height:15px;letter-spacing:-0.3px;transform-origin:0 0;transform:scaleX(0.9861);--x:0px;">Design</span>
<div style="left:66px;top:510px;width:10px;height:9px;background:#fff;border:1px solid #111;box-shadow:inset 0 1px 0 #333;"></div>
<div style="left:66px;top:513px;width:10px;height:1px;background:#111;"></div>
<span class="t" style="left:77.5px;top:509px;font-size:11px;line-height:15px;letter-spacing:-0.181px;">Split</span>
<div style="left:104px;top:510px;width:10px;height:9px;background:#fff;border:1px solid #111;box-shadow:inset 0 1px 0 #333;"></div>
<svg style="left:106px;top:513px" width="6" height="4" viewBox="0 0 6 4"><path d="M2.2 0.3L0.6 2L2.2 3.7M3.8 0.3L5.4 2L3.8 3.7" fill="none" stroke="#111" stroke-width=".9"/></svg>
<span class="t" style="left:115.5px;top:509px;font-size:11px;line-height:15px;letter-spacing:-0.3px;transform-origin:0 0;transform:scaleX(0.9762);--x:0px;">Code</span>
<div style="left:8px;top:526px;width:953px;height:3px;background:#bfdbff;"></div>
<div style="left:8px;top:529px;width:953px;height:19px;background:#f0edeb;border-top:1px solid #a3adba;"></div>
<div style="left:8px;top:548px;width:953px;height:1px;background:#fdfeff;"></div>
<div style="left:405px;top:531px;width:1px;height:17px;background:#cfcbc9;"></div>
<div style="left:406px;top:531px;width:1px;height:17px;background:#f8f7f6;"></div>
<div style="left:429px;top:531px;width:1px;height:17px;background:#cfcbc9;"></div>
<div style="left:430px;top:531px;width:1px;height:17px;background:#f8f7f6;"></div>
<div style="left:453px;top:531px;width:1px;height:17px;background:#cfcbc9;"></div>
<div style="left:454px;top:531px;width:1px;height:17px;background:#f8f7f6;"></div>
<div style="left:477px;top:531px;width:1px;height:17px;background:#cfcbc9;"></div>
<div style="left:478px;top:531px;width:1px;height:17px;background:#f8f7f6;"></div>
<div style="left:501px;top:531px;width:1px;height:17px;background:#cfcbc9;"></div>
<div style="left:502px;top:531px;width:1px;height:17px;background:#f8f7f6;"></div>
<div style="left:601px;top:531px;width:1px;height:17px;background:#cfcbc9;"></div>
<div style="left:602px;top:531px;width:1px;height:17px;background:#f8f7f6;"></div>
<div style="left:739px;top:531px;width:1px;height:17px;background:#cfcbc9;"></div>
<div style="left:740px;top:531px;width:1px;height:17px;background:#f8f7f6;"></div>
<div style="left:764px;top:531px;width:1px;height:17px;background:#cfcbc9;"></div>
<div style="left:765px;top:531px;width:1px;height:17px;background:#f8f7f6;"></div>
<div style="left:789px;top:531px;width:1px;height:17px;background:#cfcbc9;"></div>
<div style="left:790px;top:531px;width:1px;height:17px;background:#f8f7f6;"></div>
<div style="left:812px;top:531px;width:1px;height:17px;background:#cfcbc9;"></div>
<div style="left:813px;top:531px;width:1px;height:17px;background:#f8f7f6;"></div>
<div style="left:892px;top:531px;width:1px;height:17px;background:#cfcbc9;"></div>
<div style="left:893px;top:531px;width:1px;height:17px;background:#f8f7f6;"></div>
<div style="left:940px;top:531px;width:1px;height:17px;background:#cfcbc9;"></div>
<div style="left:941px;top:531px;width:1px;height:17px;background:#f8f7f6;"></div>
<span class="t" style="left:10.5px;top:533px;font-size:12px;line-height:16px;letter-spacing:-0.199px;">Line 43, Column 52</span>
<span class="t" style="left:507px;top:533px;font-size:12px;line-height:16px;letter-spacing:-0.194px;">Visual Aids:</span>
<span class="t" style="left:577px;top:533px;font-size:12px;line-height:16px;letter-spacing:0.3px;transform-origin:0 0;transform:scaleX(1.0698);--x:0px;font-weight:bold;">Off</span>
<span class="t" style="left:608px;top:533px;font-size:12px;line-height:16px;letter-spacing:0.034px;">Style Application:</span>
<span class="t" style="left:707.5px;top:533px;font-size:12px;line-height:16px;letter-spacing:-0.207px;font-weight:bold;">Auto</span>
<span class="t" style="left:818px;top:533px;font-size:12px;line-height:16px;letter-spacing:-0.3px;transform-origin:0 0;transform:scaleX(0.9886);--x:0px;">XHTML 1.0 S</span>
<span class="t" style="left:897px;top:533px;font-size:12px;line-height:16px;letter-spacing:-0.3px;transform-origin:0 0;transform:scaleX(0.8685);--x:0px;">CSS 2.1</span>
<div style="left:957px;top:537px;width:2px;height:2px;background:#c2c0bb;"></div>
<div style="left:953px;top:541px;width:2px;height:2px;background:#c2c0bb;"></div>
<div style="left:957px;top:541px;width:2px;height:2px;background:#c2c0bb;"></div>
<div style="left:949px;top:545px;width:2px;height:2px;background:#c2c0bb;"></div>
<div style="left:953px;top:545px;width:2px;height:2px;background:#c2c0bb;"></div>
<div style="left:957px;top:545px;width:2px;height:2px;background:#c2c0bb;"></div>
</div>
</body></html>
